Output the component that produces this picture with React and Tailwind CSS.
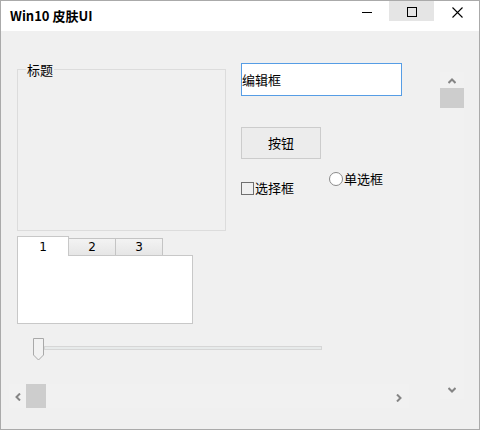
import React from 'react';

const ui = { fontFamily: '"Noto Sans CJK SC", "Liberation Sans", sans-serif' };

function Chevron({ dir = 'up' }) {
  // tiny scrollbar arrows
  const rot = { up: 0, down: 180, left: -90, right: 90 }[dir];
  return (
    <svg width="8" height="6" viewBox="0 0 8 6" style={{ transform: `rotate(${rot}deg)` }}>
      <path d="M0.5 5 L4 1.5 L7.5 5" fill="none" stroke="#858585" strokeWidth="2" />
    </svg>
  );
}

function TitleBar() {
  return (
    <div className="flex h-[30px] bg-white">
      <div className="flex-1 flex items-center pl-[9px] pb-[1px] text-[13px] font-bold text-black" style={ui}>
        Win10 皮肤UI
      </div>
      <div className="flex self-start h-[20px]">
        <div className="w-[45px] h-[20px] flex items-center justify-center">
          <div className="w-[10px] h-[1px] bg-black mt-[2px]" />
        </div>
        <div className="w-[45px] h-[20px] bg-[#e5e5e5] flex items-center justify-center">
          <div className="w-[10px] h-[10px] border border-black mt-[2px] ml-[1px]" />
        </div>
        <div className="w-[45px] h-[20px] flex items-center justify-center">
          <svg width="11" height="11" viewBox="0 0 11 11" className="mt-[2px] ml-[1px]">
            <path d="M0.5 0.5 L10.5 10.5 M10.5 0.5 L0.5 10.5" stroke="#000" strokeWidth="1.1" />
          </svg>
        </div>
      </div>
    </div>
  );
}

function GroupBox() {
  return (
    <div className="relative mt-[38px] h-[162px] w-[209px] border border-[#dcdcdc]">
      <span className="absolute -top-[8px] left-[8px] px-[1px] bg-[#f0f0f0] text-[13px] leading-[15px] text-black" style={ui}>
        标题
      </span>
    </div>
  );
}

function Tabs() {
  const tabs = ['1', '2', '3'];
  return (
    <div className="mt-[4px] flex flex-col w-[176px]" style={{ fontFamily: '"DejaVu Sans", sans-serif' }}>
      <div className="flex items-end h-[20px]">
        {tabs.map((t, i) =>
          i === 0 ? (
            <div key={t} className="w-[52px] h-[20px] -mb-[1px] relative z-10 bg-white border border-b-0 border-[#c8c8c8] flex items-center justify-center text-[12px] text-black">
              {t}
            </div>
          ) : (
            <div key={t} className="w-[47px] h-[17px] bg-gradient-to-b from-[#f3f3f3] to-[#e6e6e6] border border-b-0 border-l-0 border-[#c4c4c4] flex items-center justify-center text-[12px] text-black">
              {t}
            </div>
          )
        )}
      </div>
      <div className="h-[69px] bg-white border border-[#c8c8c8]" />
    </div>
  );
}

function Slider() {
  return (
    <div className="mt-[14px] ml-[32px] flex items-center h-[22px]">
      <svg width="12" height="23" viewBox="0 0 12 23" className="shrink-0 relative z-10">
        <path d="M0.5 0.5 H10.5 V17 L5.5 22 L0.5 17 Z" fill="#f2f2f2" stroke="#a9a9a9" />
      </svg>
      <div className="-ml-[1px] -mt-[3px] w-[278px] h-[4px] bg-[#e7eaea] border border-[#d6d6d6]" />
    </div>
  );
}

function HScroll() {
  return (
    <div className="mt-[24px] ml-[8px] w-[400px] h-[24px] bg-[#f1f1f1] flex items-center">
      <div className="w-[17px] flex justify-center pl-[1px] pt-[1px]">
        <Chevron dir="left" />
      </div>
      <div className="w-[20px] h-[24px] bg-[#cdcdcd]" />
      <div className="flex-1" />
      <div className="w-[17px] flex justify-center pt-[3px] pr-[3px]">
        <Chevron dir="right" />
      </div>
    </div>
  );
}

function VScroll() {
  return (
    <div className="mt-[41px] w-[24px] h-[327px] bg-[#f1f1f1] flex flex-col items-center">
      <div className="h-[16px] flex items-center pt-[1px]">
        <Chevron dir="up" />
      </div>
      <div className="w-[24px] h-[20px] bg-[#cdcdcd]" />
      <div className="flex-1" />
      <div className="h-[12px] flex items-start">
        <Chevron dir="down" />
      </div>
    </div>
  );
}

function RightControls() {
  return (
    <div className="ml-[15px] flex flex-col" style={ui}>
      {/* edit box: blue focus frame */}
      <div className="mt-[32px] w-[161px] h-[33px] p-[1px] bg-[#569de5]">
        <div className="h-full bg-white flex items-center text-[13px] text-black">
          <span>编辑框</span>
        </div>
      </div>
      <div className="mt-[31px] w-[80px] h-[32px] bg-[#ececec] border border-[#cccccc] flex items-center justify-center text-[13px] text-black">
        按钮
      </div>
      <div className="flex items-start">
        <label className="mt-[21px] flex items-center gap-[1px] text-[13px] leading-[16px] text-black">
          <span className="w-[13px] h-[13px] border border-[#707070]" />
          选择框
        </label>
        <label className="ml-[35px] mt-[12px] flex items-center gap-[1px] text-[13px] leading-[16px] text-black">
          <span className="w-[14px] h-[14px] rounded-full border border-[#8a8a8a] bg-white" />
          单选框
        </label>
      </div>
    </div>
  );
}

export default function App() {
  return (
    <div className="w-[480px] h-[430px] border border-[#aaaaaa] flex flex-col bg-[#f0f0f0] overflow-hidden">
      <TitleBar />
      <div className="flex-1 flex">
        <div className="w-[439px] flex flex-col">
          <div className="flex">
            <div className="ml-[16px] flex flex-col">
              <GroupBox />
              <Tabs />
            </div>
            <RightControls />
          </div>
          <Slider />
          <HScroll />
        </div>
        <VScroll />
      </div>
    </div>
  );
}
